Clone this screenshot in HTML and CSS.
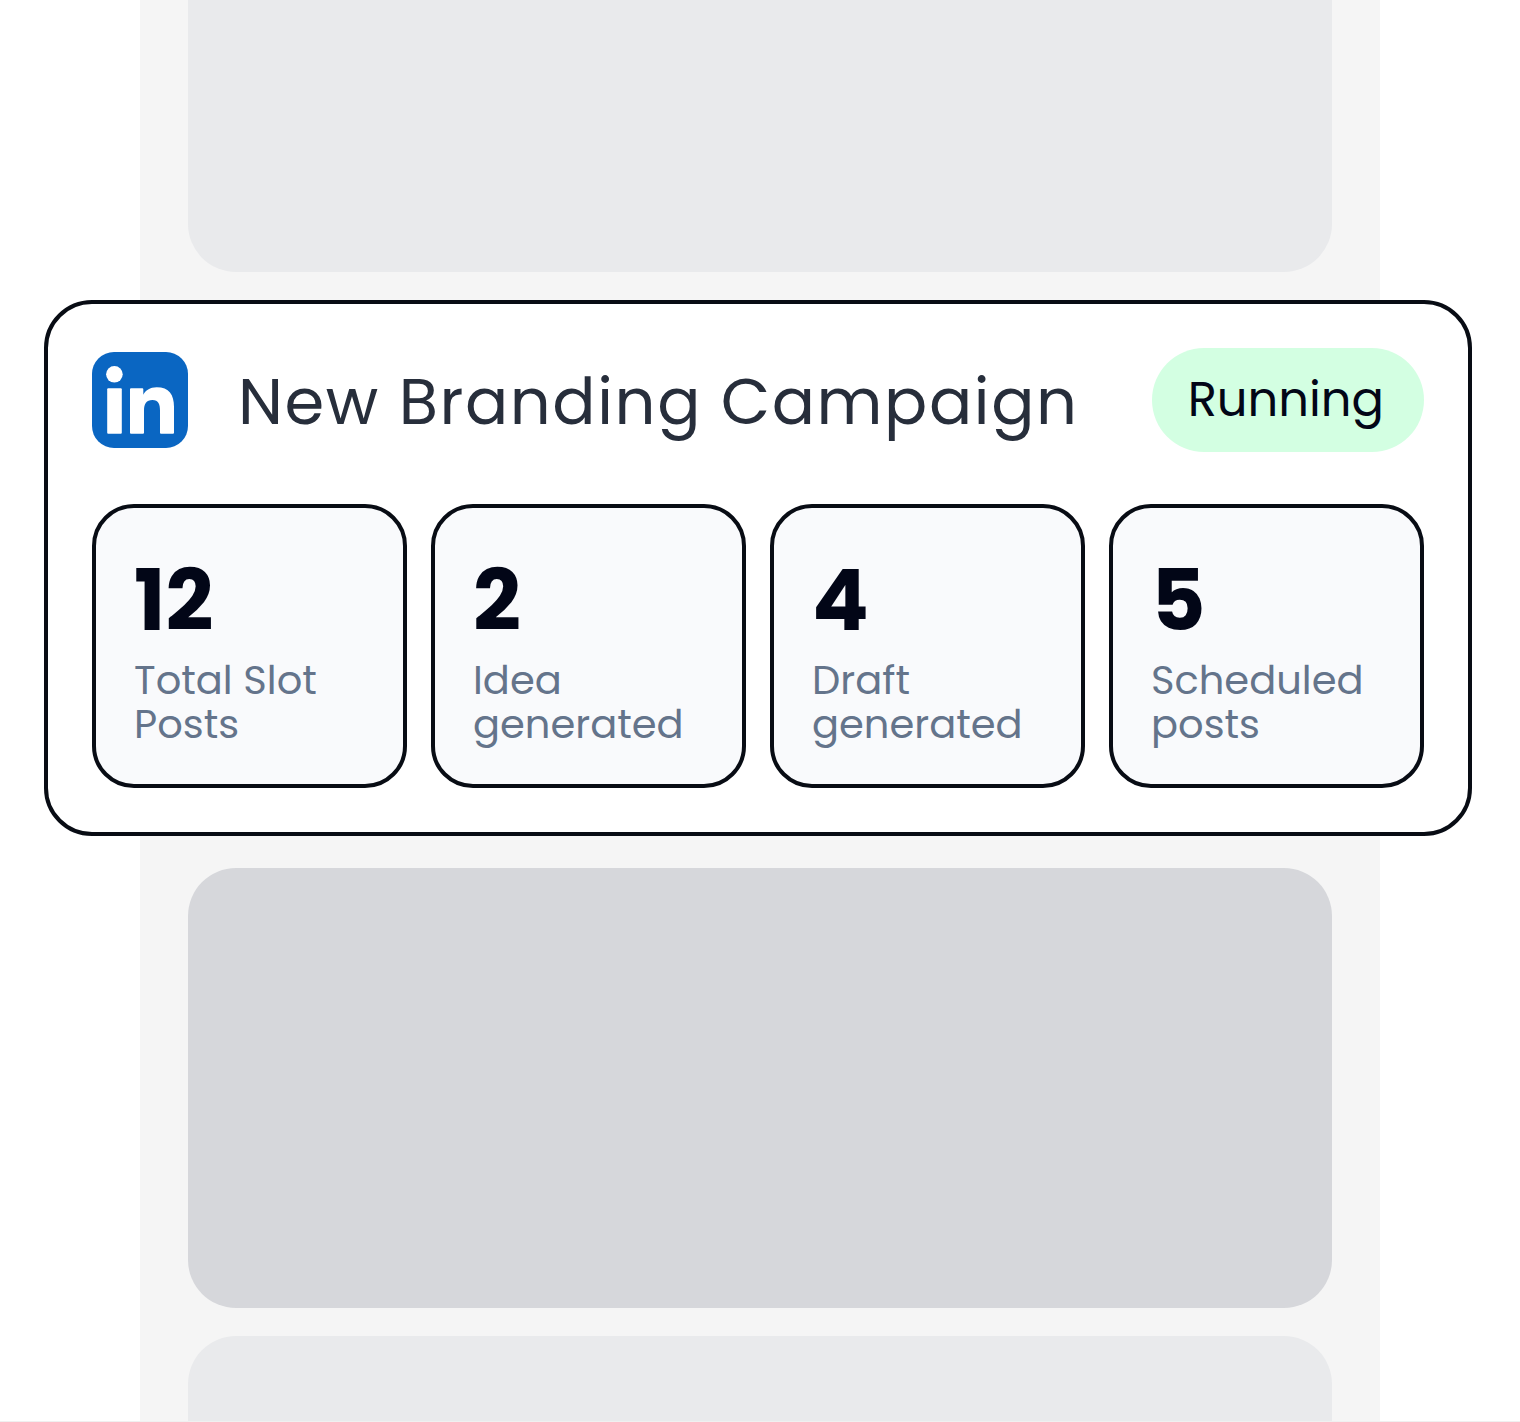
FILE: index.html
```html
<!DOCTYPE html>
<html lang="en">

<head>
  <meta charset="UTF-8" />
  <meta name="viewport" content="width=device-width, initial-scale=1.0" />
  <title>Campaigns</title>
  <link rel="stylesheet" href="styles.css">
</head>

<body>

  <main class="feed">
    <div class="placeholder placeholder-top"></div>

    <section class="campaign">
      <header class="campaign-header">
        <svg class="campaign-logo" viewBox="0 0 96 96" role="img" aria-label="LinkedIn">
          <rect width="96" height="96" rx="22" fill="#0a66c2" />
          <circle cx="22.4" cy="22.3" r="8.3" fill="#fff" />
          <rect x="15.2" y="36.3" width="14.6" height="45.4" rx="1" fill="#fff" />
          <path fill="#fff" d="M39 36.3h11.3a1 1 0 0 1 1 1v5.4c2-4 6.7-7.4 13.4-7.4 12.4 0 17.3 7.6 17.3 19.4V80.7a1 1 0 0 1-1 1H69a1 1 0 0 1-1-1V58.4c0-6-1.4-10.4-7.6-10.4-6 0-8.4 4-8.4 10.4V80.7a1 1 0 0 1-1 1H39a1 1 0 0 1-1-1V37.3a1 1 0 0 1 1-1z" />
        </svg>
        <h1 class="campaign-title">New Branding Campaign</h1>
        <span class="status">Running</span>
      </header>

      <div class="stats">
        <div class="stat">
          <div class="stat-value">12</div>
          <div class="stat-label">Total Slot Posts</div>
        </div>
        <div class="stat">
          <div class="stat-value">2</div>
          <div class="stat-label">Idea generated</div>
        </div>
        <div class="stat">
          <div class="stat-value">4</div>
          <div class="stat-label">Draft generated</div>
        </div>
        <div class="stat">
          <div class="stat-value">5</div>
          <div class="stat-label">Scheduled posts</div>
        </div>
      </div>
    </section>

    <div class="placeholder placeholder-dark"></div>
    <div class="placeholder placeholder-bottom"></div>
  </main>

</body>
</html>
```
FILE: styles.css
```css
* {
  box-sizing: border-box;
  font-family: Poppins, Inter, sans-serif;
}

body {
  margin: 0;
  background: #ffffff;
  border-bottom: 1px solid #f0f0f0;
}

.feed {
  display: flex;
  flex-direction: column;
  gap: 28px;
  min-height: calc(100vh - 1px);
  margin: 0 140px;
  padding: 0 48px;
  background: #f5f5f5;
}

/* grey blocks above and below the campaign */
.placeholder {
  height: 440px;
  border-radius: 48px;
  background: #e9eaec;
}

.placeholder-top {
  height: 272px;
  border-radius: 0 0 48px 48px;
}

.placeholder-dark {
  background: #d6d7db;
}

.placeholder-bottom {
  flex: 1;
  height: auto;
  border-radius: 48px 48px 0 0;
}

/* wider than the feed on both sides */
.campaign {
  margin: 0 -140px 4px -144px;
  padding: 44px;
  background: #ffffff;
  border: 4px solid #080c14;
  border-radius: 48px;
}

.campaign-header {
  display: flex;
  align-items: center;
  gap: 50px;
  margin-bottom: 52px;
}

.campaign-logo {
  width: 96px;
  height: 96px;
  flex-shrink: 0;
}

.campaign-title {
  flex: 1;
  margin: 0;
  padding-top: 4px;
  font-size: 64px;
  font-weight: 400;
  line-height: 96px;
  letter-spacing: 0.025em;
  white-space: nowrap;
  color: #272e3b;
}

.status {
  padding: 16px 40px 16px 36px;
  background: #d3ffe2;
  border-radius: 52px;
  font-size: 48px;
  line-height: 72px;
  color: #020617;
}

.stats {
  display: grid;
  grid-template-columns: repeat(4, 1fr);
  gap: 24px;
}

.stat {
  padding: 38px;
  background: #f9fafc;
  border: 4px solid #080c14;
  border-radius: 42px;
}

.stat-value {
  margin-bottom: 2px;
  font-size: 84px;
  font-weight: 700;
  line-height: 110px;
  color: #020617;
}

.stat-label {
  font-size: 40px;
  line-height: 44px;
  color: #64748b;
}
```
